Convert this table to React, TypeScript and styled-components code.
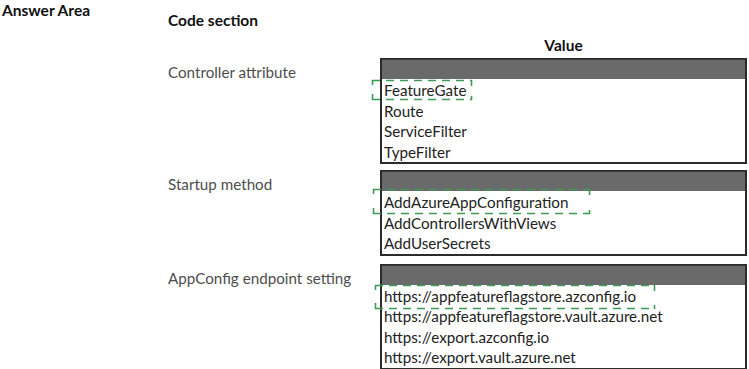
import React from "react";
import styled, { createGlobalStyle } from "styled-components";

const Global = createGlobalStyle`
  html, body { margin: 0; padding: 0; background: #fff; }
  body { font-family: Lato, "Open Sans", sans-serif; color: #222; }
`;

const Page = styled.div`
  display: grid;
  grid-template-columns: 168px 1fr;
  width: 749px;
  height: 369px;
  overflow: hidden;
`;

const AreaTitle = styled.div`
  font-weight: 700;
  font-size: 15.5px;
  line-height: 18px;
  padding: 1px 0 0 2px;
  color: #111;
`;

const Main = styled.div`
  display: flex;
  flex-direction: column;
`;

const Heading = styled.div`
  font-weight: 700;
  font-size: 15.5px;
  line-height: 18px;
  color: #111;
`;

const CodeHeading = styled(Heading)`
  padding-top: 11px;
`;

const ValueHeading = styled(Heading)`
  margin-left: 212px;
  width: 367px;
  text-align: center;
  padding-top: 7px;
  height: 22px;
`;

const Row = styled.div<{ $gap: number }>`
  display: grid;
  grid-template-columns: 212px 367px;
  margin-top: ${(p) => p.$gap}px;
`;

const Label = styled.div`
  font-size: 15.2px;
  line-height: 18px;
  color: #4d4d4d;
  padding-top: 5px;
`;

const Box = styled.div`
  position: relative;
  border: 2px solid #2b2b2b;
  border-top-width: 1px;
  background: #fff;
`;

const BoxHeader = styled.div`
  height: 20px;
  background: #6a6a6a;
  border-top: 1px solid #3a3a3a;
  box-sizing: border-box;
`;

const ItemList = styled.div`
  padding-top: 1px;
`;

const Item = styled.div`
  font-size: 15.2px;
  line-height: 20.5px;
  height: 20.5px;
  padding-left: 2px;
  color: #222;
  white-space: nowrap;
`;

const Mark = styled.svg<{ $x: number; $y: number }>`
  position: absolute;
  left: ${(p) => p.$x}px;
  top: ${(p) => p.$y}px;
  overflow: visible;
  pointer-events: none;
`;

function Bracket({ x, y, w, h }: { x: number; y: number; w: number; h: number }) {
  const c = "#3d9a55";
  return (
    <Mark $x={x} $y={y} width={w} height={h}>
      <line x1={0} y1={0.5} x2={w} y2={0.5} stroke={c} strokeWidth={1.6} strokeDasharray="8 6" />
      <line x1={0} y1={h - 0.5} x2={w} y2={h - 0.5} stroke={c} strokeWidth={1.6} strokeDasharray="8 6" />
      <line x1={0.5} y1={0} x2={0.5} y2={5} stroke={c} strokeWidth={1.6} />
      <line x1={0.5} y1={h - 6} x2={0.5} y2={h} stroke={c} strokeWidth={1.6} />
      <line x1={w - 0.5} y1={0} x2={w - 0.5} y2={6} stroke={c} strokeWidth={1.6} />
      <line x1={w - 0.5} y1={h - 4} x2={w - 0.5} y2={h} stroke={c} strokeWidth={1.6} />
    </Mark>
  );
}

type Section = {
  label: string;
  gap: number;
  items: string[];
  mark: { x: number; y: number; w: number; h: number };
};

const sections: Section[] = [
  {
    label: "Controller attribute",
    gap: 0,
    items: ["FeatureGate", "Route", "ServiceFilter", "TypeFilter"],
    mark: { x: -10, y: 21, w: 100, h: 20 },
  },
  {
    label: "Startup method",
    gap: 6,
    items: ["AddAzureAppConfiguration", "AddControllersWithViews", "AddUserSecrets"],
    mark: { x: -9, y: 18, w: 217, h: 25 },
  },
  {
    label: "AppConfig endpoint setting",
    gap: 8,
    items: [
      "https://appfeatureflagstore.azconfig.io",
      "https://appfeatureflagstore.vault.azure.net",
      "https://export.azconfig.io",
      "https://export.vault.azure.net",
    ],
    mark: { x: -7, y: 20, w: 280, h: 24 },
  },
];

export default function App() {
  return (
    <>
      <Global />
      <Page>
        <AreaTitle>Answer Area</AreaTitle>
        <Main>
          <CodeHeading>Code section</CodeHeading>
          <ValueHeading>Value</ValueHeading>
          {sections.map((s) => (
            <Row key={s.label} $gap={s.gap}>
              <Label>{s.label}</Label>
              <Box>
                <BoxHeader />
                <ItemList>
                  {s.items.map((it) => (
                    <Item key={it}>{it}</Item>
                  ))}
                </ItemList>
                <Bracket {...s.mark} />
              </Box>
            </Row>
          ))}
        </Main>
      </Page>
    </>
  );
}
